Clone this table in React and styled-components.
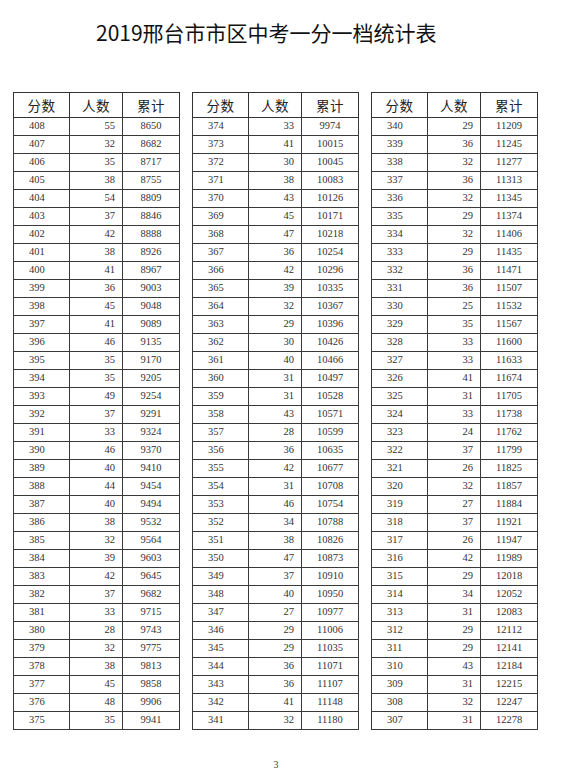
import React from 'react'
import styled, { createGlobalStyle } from 'styled-components'

const GlobalStyle = createGlobalStyle`
  html, body {
    margin: 0;
    padding: 0;
    background: #fff;
  }
  body {
    font-family: 'Liberation Serif', 'Noto Sans CJK SC', serif;
    color: #222;
  }
`

const Page = styled.div`
  width: 571px;
  height: 783px;
  display: flex;
  flex-direction: column;
  background: #fff;
`

const Title = styled.h1`
  margin: 20px 0 0 96px;
  font-family: 'Noto Sans CJK SC', 'Noto Sans', sans-serif;
  font-size: 21px;
  font-weight: 400;
  line-height: 24px;
  color: #111;
  white-space: nowrap;
`

const Tables = styled.div`
  display: grid;
  grid-template-columns: repeat(3, 166px);
  column-gap: 13px;
  margin-top: 48px;
  padding-left: 13px;
`

const Table = styled.table`
  width: 166px;
  border-collapse: collapse;
  table-layout: fixed;
`

const HeadCell = styled.th`
  height: 24px;
  padding: 0;
  border: 1px solid #333;
  font-family: 'Noto Sans CJK SC', serif;
  font-size: 13.5px;
  font-weight: 400;
  color: #222;
  text-align: center;
  letter-spacing: 0.5px;
`

const Cell = styled.td`
  height: 17px;
  padding: ${({ $align }) =>
    $align === 'left' ? '0 0 0 15px' : $align === 'right' ? '0 7px 0 0' : '0'};
  border: 1px solid #3a3a3a;
  font-family: 'Liberation Serif', serif;
  font-size: 10.5px;
  color: #333;
  text-align: ${({ $align }) => $align};
  line-height: 1;
`

const PageNumber = styled.div`
  margin-top: 29px;
  padding-right: 19px;
  text-align: center;
  font-family: 'Liberation Serif', serif;
  font-size: 10px;
  color: #444;
`

// counts per score, highest score first; cumulative totals follow from them
const columns = [
  {
    top: 408,
    start: 8595,
    counts: [55, 32, 35, 38, 54, 37, 42, 38, 41, 36, 45, 41, 46, 35, 35, 49, 37, 33, 46, 40, 44, 40, 38, 32, 39, 42, 37, 33, 28, 32, 38, 45, 48, 35],
  },
  {
    top: 374,
    start: 9941,
    counts: [33, 41, 30, 38, 43, 45, 47, 36, 42, 39, 32, 29, 30, 40, 31, 31, 43, 28, 36, 42, 31, 46, 34, 38, 47, 37, 40, 27, 29, 29, 36, 36, 41, 32],
  },
  {
    top: 340,
    start: 11180,
    counts: [29, 36, 32, 36, 32, 29, 32, 29, 36, 36, 25, 35, 33, 33, 41, 31, 33, 24, 37, 26, 32, 27, 37, 26, 42, 29, 34, 31, 29, 29, 43, 31, 32, 31],
  },
]

const buildRows = ({ top, start, counts }) => {
  let total = start
  return counts.map((count, i) => {
    total += count
    return { score: top - i, count, total }
  })
}

const ScoreTable = ({ rows }) => (
  <Table>
    <colgroup>
      <col style={{ width: 56 }} />
      <col style={{ width: 53 }} />
      <col style={{ width: 57 }} />
    </colgroup>
    <thead>
      <tr>
        <HeadCell>分数</HeadCell>
        <HeadCell>人数</HeadCell>
        <HeadCell>累计</HeadCell>
      </tr>
    </thead>
    <tbody>
      {rows.map(row => (
        <tr key={row.score}>
          <Cell $align='left'>{row.score}</Cell>
          <Cell $align='right'>{row.count}</Cell>
          <Cell $align='center'>{row.total}</Cell>
        </tr>
      ))}
    </tbody>
  </Table>
)

const App = () => (
  <>
    <GlobalStyle />
    <Page>
      <Title>2019邢台市市区中考一分一档统计表</Title>
      <Tables>
        {columns.map(col => (
          <ScoreTable key={col.top} rows={buildRows(col)} />
        ))}
      </Tables>
      <PageNumber>3</PageNumber>
    </Page>
  </>
)

export default App
